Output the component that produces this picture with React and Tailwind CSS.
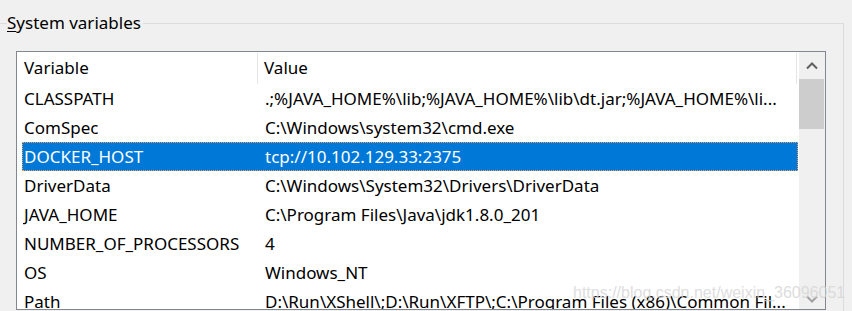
const rows = [
  ["CLASSPATH", ".;%JAVA_HOME%\\lib;%JAVA_HOME%\\lib\\dt.jar;%JAVA_HOME%\\li..."],
  ["ComSpec", "C:\\Windows\\system32\\cmd.exe"],
  ["DOCKER_HOST", "tcp://10.102.129.33:2375"],
  ["DriverData", "C:\\Windows\\System32\\Drivers\\DriverData"],
  ["JAVA_HOME", "C:\\Program Files\\Java\\jdk1.8.0_201"],
  ["NUMBER_OF_PROCESSORS", "4"],
  ["OS", "Windows_NT"],
  ["Path", "D:\\Run\\XShell\\;D:\\Run\\XFTP\\;C:\\Program Files (x86)\\Common Fil..."],
];

export default function App() {
  return (
    <div
      className="relative h-[311px] w-[852px] overflow-hidden bg-[#f0f0f0] text-[17px] text-black"
      style={{ fontFamily: '"Noto Sans", "Open Sans", sans-serif' }}
    >
      <div className="relative ml-[-2px] mt-[23px] h-[300px] w-[846px] border border-[#dcdcdc]">
        <div className="absolute left-[8px] top-[-13px] bg-[#f0f0f0] pr-[2px] leading-[24px]">
          <span className="underline underline-offset-2">S</span>ystem variables
        </div>

        <div className="ml-[17px] mt-[27px] flex h-[259px] w-[810px] overflow-hidden border border-[#828790] bg-white">
          <div className="w-[782px] shrink-0 overflow-hidden">
            <div className="flex h-[32px] items-center">
              <div className="flex h-[31px] w-[241px] shrink-0 items-center border-r border-[#e5e5e5] pl-[7px]">Variable</div>
              <div className="flex h-[31px] w-[539px] items-center border-r border-[#e5e5e5] pl-[6px]">Value</div>
            </div>
            {rows.map(([name, value]) => {
              const sel = name === "DOCKER_HOST";
              return (
                <div
                  key={name}
                  className={
                    sel
                      ? "ml-[5px] grid h-[29px] w-[776px] grid-cols-[242px_1fr] items-center border border-dotted border-[#f5a05a] bg-[#0078d7] text-white"
                      : "ml-[5px] grid h-[29px] w-[776px] grid-cols-[242px_1fr] items-center border border-transparent"
                  }
                >
                  <div className="overflow-hidden whitespace-nowrap pl-[1px]">{name}</div>
                  <div className="overflow-hidden whitespace-nowrap">{value}</div>
                </div>
              );
            })}
          </div>

          <div className="flex w-[26px] shrink-0 flex-col bg-[#f0f0f0]">
            <div className="flex h-[27px] items-center justify-center">
              <svg width="12" height="8" viewBox="0 0 12 8">
                <path d="M1 6.5 L6 1.5 L11 6.5" fill="none" stroke="#606060" strokeWidth="2" />
              </svg>
            </div>
            <div className="mr-[1px] h-[50px] bg-[#cdcdcd]" />
            <div className="flex-1" />
            <div className="flex h-[27px] items-center justify-center pt-[6px]">
              <svg width="12" height="8" viewBox="0 0 12 8">
                <path d="M1 1.5 L6 6.5 L11 1.5" fill="none" stroke="#a0a0a0" strokeWidth="2" />
              </svg>
            </div>
          </div>
        </div>
      </div>

      <div
        className="pointer-events-none absolute left-[573px] top-[281px] whitespace-nowrap text-[16px] text-[#d6d6d6] opacity-80"
        style={{ fontFamily: '"Liberation Sans", Arial, sans-serif' }}
      >
        https://blog.csdn.net/weixin_36096051
      </div>
    </div>
  );
}
